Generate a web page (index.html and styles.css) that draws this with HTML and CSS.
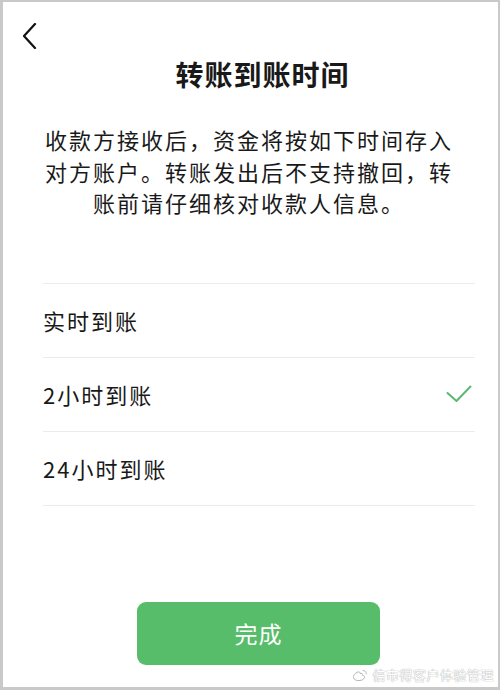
FILE: index.html
```html
<!DOCTYPE html>
<html lang="zh-CN">
<head>
  <meta charset="UTF-8" />
  <meta name="viewport" content="width=device-width, initial-scale=1.0" />
  <title>转账到账时间</title>
  <link rel="stylesheet" href="styles.css">
</head>
<body>
  <div class="screen">
    <div class="nav">
      <svg class="back" width="16" height="26" viewBox="0 0 16 26">
        <polyline points="13,1 2,13 13,25" fill="none" stroke="#111" stroke-width="2.2" stroke-linecap="round" stroke-linejoin="round" />
      </svg>
    </div>

    <h2 class="title">转账到账时间</h2>

    <p class="desc">收款方接收后，资金将按如下时间存入对方账户。转账发出后不支持撤回，转账前请仔细核对收款人信息。</p>

    <ul class="options">
      <li class="option">实时到账</li>
      <li class="option selected">
        <span>2小时到账</span>
        <svg class="check" width="26" height="18" viewBox="0 0 26 18">
          <polyline points="1.5,8 10.5,16 24.5,1.5" fill="none" stroke="#5cb874" stroke-width="2" stroke-linecap="round" stroke-linejoin="round" />
        </svg>
      </li>
      <li class="option">24小时到账</li>
    </ul>

    <button class="btn" type="button">完成</button>

    <div class="mark">
      <svg width="16" height="14" viewBox="0 0 16 14">
        <path d="M6 4C3 5 1 7.5 1.5 9.5 2 12 5 13 8 12.5 11.5 12 13 10 12.5 8.5 12 7.5 10.5 7.5 10.5 7.5 11 6 10 5 8 5.5 8 4 7 3.5 6 4Z" fill="#fff" stroke="#b5b5b5" stroke-width="1" />
        <path d="M11 2.5C13 2.3 14.5 3.8 14.3 5.8" fill="none" stroke="#b5b5b5" stroke-width="1" stroke-linecap="round" />
      </svg>
      <span>倍市得客户体验管理</span>
    </div>
  </div>
</body>
</html>
```

FILE: styles.css
```css
body {
  margin: 0;
  font-family: "Noto Sans CJK SC", "Noto Sans", sans-serif;
  color: #191919;
  background: #fff;
}
.screen {
  position: relative;
  box-sizing: border-box;
  width: 500px;
  height: 690px;
  border: 2px solid #c9c9c9;
  border-left-width: 3px;
  border-bottom-width: 3px;
  background: #fff;
  overflow: hidden;
}
.nav {
  height: 31px;
  padding: 21px 0 0 19px;
}
.back {
  display: block;
}
.title {
  margin: 0;
  padding-left: 24px;
  font-size: 28px;
  line-height: 40px;
  font-weight: bold;
  text-align: center;
  letter-spacing: 1px;
}
.desc {
  width: 412px;
  margin: 30px 0 0 40px;
  font-size: 22px;
  line-height: 31.5px;
  letter-spacing: 2px;
  text-align: center;
}
.options {
  list-style: none;
  margin: 64px 23px 0 40px;
  padding: 0;
  border-bottom: 1px solid #ececec;
}
.option {
  display: flex;
  align-items: center;
  justify-content: space-between;
  height: 73px;
  padding-right: 3px;
  border-top: 1px solid #ececec;
  font-size: 22px;
  letter-spacing: 2px;
}
.check {
  display: block;
}
.btn {
  display: block;
  width: 243px;
  height: 63px;
  margin: 96px 0 0 134px;
  border: none;
  border-radius: 9px;
  background: #57bd6a;
  color: #fff;
  font-family: inherit;
  font-size: 23px;
  letter-spacing: 1px;
}
.mark {
  position: absolute;
  right: 4px;
  bottom: 3px;
  display: flex;
  align-items: center;
  gap: 4px;
  color: #fff;
  font-size: 13px;
  letter-spacing: 0.5px;
  text-shadow: 0 0 1px #aaa, 0 0 1px #aaa;
}
```
